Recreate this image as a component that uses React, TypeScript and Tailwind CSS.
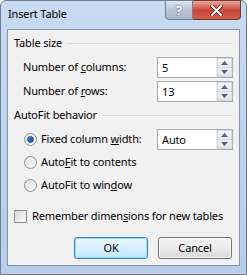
import React from 'react';

const font = { fontFamily: '"Noto Sans", "Open Sans", sans-serif' };
const txt = 'text-[11px] tracking-[-0.15px] text-black';

const Spin = ({ value }: { value: string }) => (
  <div className="flex w-[76px] h-[21px] border border-[#abadb3] bg-white">
    <div className={`flex-1 pl-[4px] leading-[19px] ${txt}`}>{value}</div>
    <div className="flex flex-col w-[16px] border-l border-[#e3e9ef]">
      <div className="flex-1 flex items-center justify-center bg-gradient-to-b from-[#f7f7f7] to-[#e6e6e6] border border-[#cfd6de]">
        <svg width="7" height="4" viewBox="0 0 7 4"><path d="M0 4 L3.5 0 L7 4 Z" fill="#4d6185" /></svg>
      </div>
      <div className="flex-1 flex items-center justify-center bg-gradient-to-b from-[#f1f1f1] to-[#e3e3e3] border border-t-0 border-[#cfd6de]">
        <svg width="7" height="4" viewBox="0 0 7 4"><path d="M0 0 L3.5 4 L7 0 Z" fill="#4d6185" /></svg>
      </div>
    </div>
  </div>
);

const Radio = ({ checked }: { checked?: boolean }) => (
  <div className="w-[13px] h-[13px] rounded-full border border-[#8e8f8f] bg-gradient-to-br from-[#e0e0e0] to-[#f6f6f6] flex items-center justify-center">
    {checked && (
      <div className="w-[7px] h-[7px] rounded-full bg-gradient-to-br from-[#3f86c4] to-[#1c4f8a] border border-[#27508c]" />
    )}
  </div>
);

const Heading = ({ label }: { label: string }) => (
  <div className="flex items-center h-[20px] pl-[6px] pr-[6px] gap-[5px]">
    <span className={`whitespace-nowrap ${txt}`}>{label}</span>
    <div className="flex-1 h-px bg-[#dcdcdc]" />
  </div>
);

export default function App() {
  return (
    <div className="w-[247px] h-[275px] bg-white" style={font}>
      <div className="relative w-[247px] h-[275px] rounded-t-[6px] border border-[#6d7d94] bg-gradient-to-b from-[#c8daf0] via-[#bed3ee] to-[#b7cdea] flex flex-col">
        {/* title bar */}
        <div className="h-[28px] flex items-center pl-[7px]">
          <span className={`-mt-[2px] ${txt}`}>Insert Table</span>
        </div>
        <div className="absolute top-[-1px] right-[5px] flex">
          <div className="w-[28px] h-[20px] rounded-bl-[4px] border border-[#6f7f96] bg-gradient-to-b from-[#dfe7f1] via-[#b9c6d6] to-[#a6b6ca] flex items-center justify-center text-white text-[13px] font-bold leading-none" style={{ textShadow: '0 0 2px #34445c' }}>
            ?
          </div>
          <div className="w-[48px] h-[20px] rounded-br-[4px] border border-l-0 border-[#6f3a36] bg-gradient-to-b from-[#e9a99b] via-[#c9463a] to-[#d35b48] flex items-center justify-center">
            <svg width="13" height="11" viewBox="0 0 13 11">
              <path d="M2 1 L11 10 M11 1 L2 10" stroke="#3b1a16" strokeWidth="3.4" strokeLinecap="round" />
              <path d="M2 1 L11 10 M11 1 L2 10" stroke="#ffffff" strokeWidth="2" strokeLinecap="round" />
            </svg>
          </div>
        </div>

        {/* client area */}
        <div className="mx-[6px] h-[237px] border border-[#8593a8] bg-[#f0f0f0] flex flex-col pt-[3px]">
          <Heading label="Table size" />
          <div className="flex items-center justify-between h-[21px] mt-[4px] pl-[15px] pr-[6px]">
            <span className={txt}>Number of <u>c</u>olumns:</span>
            <Spin value="5" />
          </div>
          <div className="flex items-center justify-between h-[21px] mt-[3px] pl-[15px] pr-[6px]">
            <span className={txt}>Number of <u>r</u>ows:</span>
            <Spin value="13" />
          </div>
          <div className="mt-[3px]">
            <Heading label="AutoFit behavior" />
          </div>
          <div className="flex items-center h-[21px] mt-[4px] pl-[16px] pr-[6px]">
            <Radio checked />
            <span className={`ml-[4px] flex-1 ${txt}`}>Fixed column <u>w</u>idth:</span>
            <Spin value="Auto" />
          </div>
          <div className="flex items-center h-[20px] mt-[2px] pl-[16px]">
            <Radio />
            <span className={`ml-[4px] ${txt}`}>Auto<u>F</u>it to contents</span>
          </div>
          <div className="flex items-center h-[20px] mt-[3px] pl-[16px]">
            <Radio />
            <span className={`ml-[4px] ${txt}`}>AutoFit to win<u>d</u>ow</span>
          </div>
          <div className="flex items-center h-[20px] mt-[11px] pl-[6px]">
            <div className="w-[13px] h-[13px] border border-[#8e8f8f] bg-gradient-to-br from-[#dcdcdc] to-[#f8f8f8]" />
            <span className={`ml-[5px] whitespace-nowrap ${txt}`}>Remember dimen<u>s</u>ions for new tables</span>
          </div>
          <div className="flex justify-end gap-[10px] mt-[11px] pr-[7px]">
            <button className={`w-[74px] h-[22px] rounded-[3px] border border-[#3c7fb1] bg-gradient-to-b from-[#eaf6fd] via-[#d9f0fc] to-[#bee6fd] shadow-[inset_0_0_0_1px_#a8dbf6] ${txt}`}>
              OK
            </button>
            <button className={`w-[74px] h-[22px] rounded-[3px] border border-[#707070] bg-gradient-to-b from-[#f2f2f2] via-[#ebebeb] to-[#d6d6d6] shadow-[inset_0_0_0_1px_#fcfcfc] ${txt}`}>
              Cancel
            </button>
          </div>
        </div>
      </div>
    </div>
  );
}
